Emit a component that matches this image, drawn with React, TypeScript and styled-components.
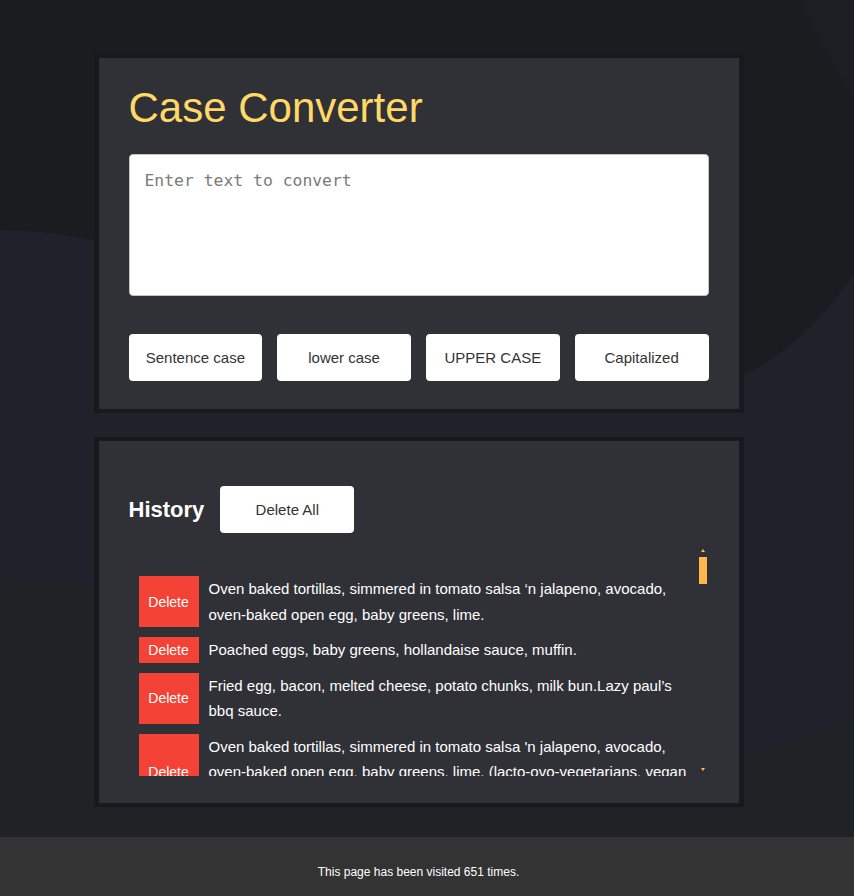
import React from 'react'
import styled, { createGlobalStyle } from 'styled-components'

const GLOBAL = createGlobalStyle`
  body {
    margin: 0;
    background: #1c1d20;
    font-family: 'Liberation Sans', Arial, sans-serif;
  }
  * {
    box-sizing: border-box;
  }
`

const STYLED_PAGE = styled.div`
  position: relative;
  min-height: 100vh;
  overflow: hidden;
`

const STYLED_BACKDROP = styled.svg`
  position: absolute;
  inset: 0;
  width: 100%;
  height: 100%;
  z-index: 0;
`

const STYLED_MAIN = styled.main`
  position: relative;
  z-index: 1;
  display: flex;
  flex-direction: column;
  align-items: center;
  gap: 24px;
  padding: 54px 17px 30px 0;
`

const STYLED_CARD = styled.section`
  width: 650px;
  background: #303137;
  border: 4px solid #18191c;
  border-left-width: 5px;
  border-right-width: 5px;
  padding: ${({ $top }: { $top: number }) => $top}px 30px 27px;
`

const STYLED_TITLE = styled.h1`
  margin: 0 0 22px;
  font-size: 42px;
  font-weight: 400;
  color: #ffd866;
`

const STYLED_INPUT = styled.textarea`
  display: block;
  width: 100%;
  height: 142px;
  padding: 16px 15px;
  border: 1px solid #c4c4c4;
  border-radius: 4px;
  background: #fff;
  font-family: 'DejaVu Sans Mono', monospace;
  font-size: 16.4px;
  resize: none;
  outline: none;
  &::placeholder {
    color: #7a7a7a;
  }
`

const STYLED_ACTIONS = styled.div`
  display: grid;
  grid-template-columns: repeat(4, 1fr);
  gap: 15px;
  margin: 38px 0 1px;
`

const STYLED_BUTTON = styled.button`
  height: 47px;
  width: ${({ $width }: { $width?: number }) => ($width ? `${$width}px` : 'auto')};
  border: none;
  border-radius: 4px;
  background: #fff;
  color: #333;
  font-family: 'Liberation Sans', Arial, sans-serif;
  font-size: 15px;
  cursor: pointer;
`

const STYLED_HEADER = styled.div`
  display: flex;
  align-items: center;
  gap: 16px;
`

const STYLED_HEADING = styled.h2`
  margin: 0;
  font-size: 22px;
  font-weight: 700;
  color: #fff;
`

const STYLED_LIST_FRAME = styled.div`
  position: relative;
  margin: 15px 2px 0 0;
`

const STYLED_LIST = styled.ul`
  list-style: none;
  height: 228px;
  margin: 0;
  padding: 28px 8px 0 10px;
  overflow-y: auto;
  scrollbar-width: none;
  &::-webkit-scrollbar {
    display: none;
  }
`

const STYLED_RAIL = styled.div`
  position: absolute;
  top: 0;
  right: 0;
  bottom: 0;
  width: 8px;
  display: flex;
  flex-direction: column;
  align-items: center;
  pointer-events: none;
`

const STYLED_ARROW = styled.span`
  width: 0;
  height: 0;
  margin: ${({ $down }: { $down?: boolean }) => ($down ? 'auto 0 5px' : '1px 0 5px')};
  border-left: 2.5px solid transparent;
  border-right: 2.5px solid transparent;
  ${({ $down }: { $down?: boolean }) =>
    $down ? 'border-top: 3px solid #ffb74d;' : 'border-bottom: 3px solid #ffb74d;'}
`

const STYLED_THUMB = styled.span`
  width: 8px;
  background: #ffb74d;
`

const STYLED_ITEM = styled.li`
  display: flex;
  gap: 10px;
  margin-bottom: 10px;
`

const STYLED_DELETE = styled.button`
  flex-shrink: 0;
  width: 60px;
  border: none;
  background: #f44336;
  color: #fff;
  font-family: 'Liberation Sans', Arial, sans-serif;
  font-size: 14px;
  padding: 0;
  cursor: pointer;
`

const STYLED_TEXT = styled.p`
  margin: 0;
  font-size: 15px;
  line-height: 1.7;
  color: #fff;
`

const STYLED_FOOTER = styled.footer`
  position: relative;
  z-index: 1;
  background: #333;
  color: #fff;
  font-size: 12px;
  text-align: center;
  padding: 28px 17px 28px 0;
`

const caseButtons = ['Sentence case', 'lower case', 'UPPER CASE', 'Capitalized']

const recipes = [
  'Oven baked tortillas, simmered in tomato salsa ‘n jalapeno, avocado, oven-baked open egg, baby greens, lime.',
  'Poached eggs, baby greens, hollandaise sauce, muffin.',
  'Fried egg, bacon, melted cheese, potato chunks, milk bun.Lazy paul’s bbq sauce.',
  "Oven baked tortillas, simmered in tomato salsa 'n jalapeno, avocado, oven-baked open egg, baby greens, lime. (lacto-ovo-vegetarians, vegan option with tofu scramble)",
  'Granola, greek yoghurt, fresh berries, honey.',
  'Sourdough toast, smashed avocado, feta, chili flakes.',
]

const history = Array.from({ length: 33 }, (_, i) => recipes[i % recipes.length])

const Backdrop = () => (
  <STYLED_BACKDROP viewBox="0 0 854 896" preserveAspectRatio="none">
    <rect width="854" height="896" fill="#20212a" />
    <path d="M0 0 H854 V272 Q800 345 743 371 L110 240 Q50 228 0 227 Z" fill="#1b1c1f" />
    <path d="M800 0 Q835 70 854 95 V0 Z" fill="#1d1e24" />
    <path d="M0 570 Q60 574 100 580 L743 749 Q800 728 854 708 V896 H0 Z" fill="#202326" />
  </STYLED_BACKDROP>
)

const HistoryList = () => {
  const listRef = React.useRef<HTMLUListElement>(null)
  const [thumb, setThumb] = React.useState({ top: 0, size: 26 })

  const sync = () => {
    const el = listRef.current
    if (!el) return
    const track = el.clientHeight - 18
    const size = Math.max(20, (el.clientHeight / el.scrollHeight) * track)
    const range = el.scrollHeight - el.clientHeight
    const top = range > 0 ? (el.scrollTop / range) * (track - size) : 0
    setThumb({ top, size })
  }

  React.useEffect(sync, [])

  return (
    <STYLED_LIST_FRAME>
      <STYLED_LIST ref={listRef} onScroll={sync}>
        {history.map((text, i) => (
          <STYLED_ITEM key={i}>
            <STYLED_DELETE>Delete</STYLED_DELETE>
            <STYLED_TEXT>{text}</STYLED_TEXT>
          </STYLED_ITEM>
        ))}
      </STYLED_LIST>
      <STYLED_RAIL>
        <STYLED_ARROW />
        <STYLED_THUMB style={{ height: thumb.size, marginTop: thumb.top }} />
        <STYLED_ARROW $down />
      </STYLED_RAIL>
    </STYLED_LIST_FRAME>
  )
}

export default function App() {
  return (
    <STYLED_PAGE>
      <GLOBAL />
      <Backdrop />
      <STYLED_MAIN>
        <STYLED_CARD $top={26}>
          <STYLED_TITLE>Case Converter</STYLED_TITLE>
          <STYLED_INPUT placeholder="Enter text to convert" />
          <STYLED_ACTIONS>
            {caseButtons.map((label) => (
              <STYLED_BUTTON key={label}>{label}</STYLED_BUTTON>
            ))}
          </STYLED_ACTIONS>
        </STYLED_CARD>
        <STYLED_CARD $top={45}>
          <STYLED_HEADER>
            <STYLED_HEADING>History</STYLED_HEADING>
            <STYLED_BUTTON $width={134}>Delete All</STYLED_BUTTON>
          </STYLED_HEADER>
          <HistoryList />
        </STYLED_CARD>
      </STYLED_MAIN>
      <STYLED_FOOTER>This page has been visited 651 times.</STYLED_FOOTER>
    </STYLED_PAGE>
  )
}
